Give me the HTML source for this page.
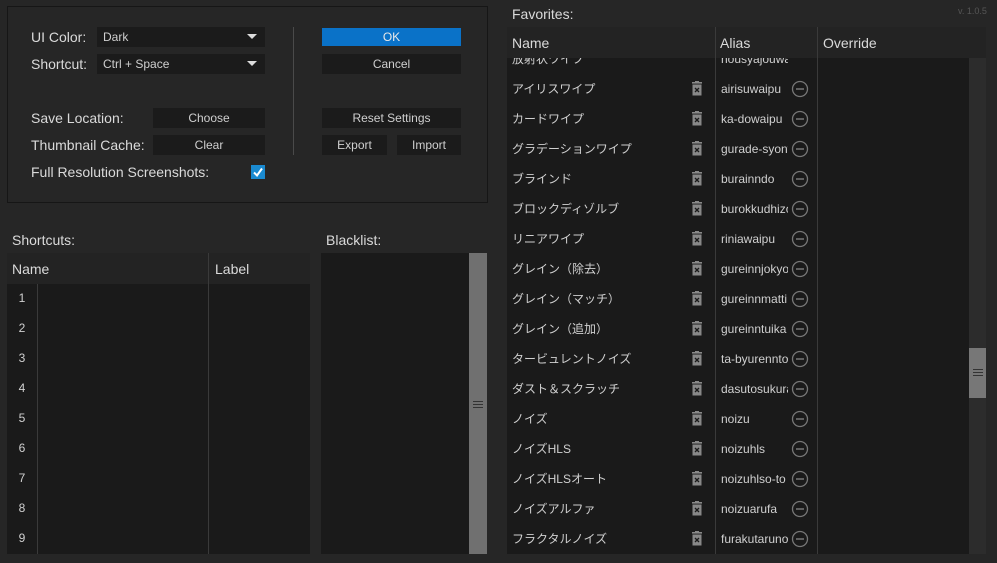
<!DOCTYPE html>
<html><head><meta charset="utf-8"><style>
*{margin:0;padding:0;box-sizing:border-box}
body{width:997px;height:563px;background:#262626;font-family:"Liberation Sans","Noto Sans CJK JP",sans-serif;color:#d2d2d2;position:relative;overflow:hidden;font-size:14px}
.a{position:absolute}
.box{left:7px;top:6px;width:481px;height:197px;border:1px solid #161616}
.lbl{font-size:14px;color:#dadada}
.dd{background:#1b1b1b;height:20px;font-size:12px;padding-left:6px;line-height:20px;color:#cfcfcf}
.dd:after{content:"";position:absolute;right:8px;top:7px;border-left:5px solid transparent;border-right:5px solid transparent;border-top:5px solid #ddd}
.btn{background:#1b1b1b;height:20px;font-size:12px;line-height:20px;text-align:center;color:#cfcfcf}
.hdr{background:#232323}
.body{background:#1a1a1a}
.vl{width:1px;background:#3a3a3a}
.num{font-size:12px;color:#d0d0d0;width:30px;text-align:center}
.fn{font-size:12px;color:#d0d0d0;line-height:14px}
.al{font-size:12px;color:#d0d0d0;width:67px;overflow:hidden;white-space:nowrap}
</style></head><body>
<div class="a box"></div>
<div class="a lbl" style="left:31px;top:29px">UI Color:</div>
<div class="a dd" style="left:97px;top:27px;width:168px">Dark</div>
<div class="a lbl" style="left:31px;top:56px">Shortcut:</div>
<div class="a dd" style="left:97px;top:54px;width:168px">Ctrl + Space</div>
<div class="a lbl" style="left:31px;top:110px">Save Location:</div>
<div class="a btn" style="left:153px;top:108px;width:112px">Choose</div>
<div class="a lbl" style="left:31px;top:137px">Thumbnail Cache:</div>
<div class="a btn" style="left:153px;top:135px;width:112px">Clear</div>
<div class="a lbl" style="left:31px;top:164px">Full Resolution Screenshots:</div>
<div class="a" style="left:251px;top:165px;width:14px;height:14px;background:#1a8ad0"><svg width="14" height="14"><path d="M3 7.5 L6 10.5 L11 3.5" stroke="#fff" stroke-width="2" fill="none"/></svg></div>
<div class="a" style="left:293px;top:27px;width:1px;height:128px;background:#4a4a4a"></div>
<div class="a btn" style="left:322px;top:28px;width:139px;height:18px;line-height:18px;background:#0a72c8;color:#e8e8e8">OK</div>
<div class="a btn" style="left:322px;top:54px;width:139px">Cancel</div>
<div class="a btn" style="left:322px;top:108px;width:139px">Reset Settings</div>
<div class="a btn" style="left:322px;top:135px;width:65px">Export</div>
<div class="a btn" style="left:397px;top:135px;width:64px">Import</div>

<div class="a lbl" style="left:12px;top:232px">Shortcuts:</div>
<div class="a hdr" style="left:7px;top:253px;width:303px;height:31px"></div>
<div class="a lbl" style="left:12px;top:261px">Name</div>
<div class="a lbl" style="left:215px;top:261px">Label</div>
<div class="a body" style="left:7px;top:284px;width:303px;height:270px"></div>
<div class="a vl" style="left:37px;top:284px;height:270px"></div>
<div class="a vl" style="left:208px;top:253px;height:301px"></div>
<div class="a num" style="left:7px;top:291px">1</div>
<div class="a num" style="left:7px;top:321px">2</div>
<div class="a num" style="left:7px;top:351px">3</div>
<div class="a num" style="left:7px;top:381px">4</div>
<div class="a num" style="left:7px;top:411px">5</div>
<div class="a num" style="left:7px;top:441px">6</div>
<div class="a num" style="left:7px;top:471px">7</div>
<div class="a num" style="left:7px;top:501px">8</div>
<div class="a num" style="left:7px;top:531px">9</div>

<div class="a lbl" style="left:326px;top:232px">Blacklist:</div>
<div class="a body" style="left:321px;top:253px;width:148px;height:301px"></div>
<div class="a" style="left:469px;top:253px;width:18px;height:301px;background:#707070"></div>
<div class="a" style="left:473px;top:401px;width:10px;height:7px;border-top:1px solid #333;border-bottom:1px solid #333"></div>
<div class="a" style="left:473px;top:404px;width:10px;height:1px;background:#333"></div>

<div class="a lbl" style="left:512px;top:6px">Favorites:</div>
<div class="a" style="left:958px;top:6px;font-size:9px;color:#555">v. 1.0.5</div>
<div class="a body" style="left:507px;top:27px;width:462px;height:527px"></div>
<div class="a" style="left:969px;top:58px;width:17px;height:496px;background:#2c2c2c"></div>
<div class="a" style="left:969px;top:348px;width:17px;height:50px;background:#777"></div>
<div class="a" style="left:973px;top:369px;width:10px;height:7px;border-top:1px solid #333;border-bottom:1px solid #333"></div>
<div class="a" style="left:973px;top:372px;width:10px;height:1px;background:#333"></div>
<div class="a vl" style="left:715px;top:27px;height:527px"></div>
<div class="a vl" style="left:817px;top:27px;height:527px"></div>

<div class="a fn" style="left:512px;top:52px">放射状ワイプ</div><div class="a al" style="left:721px;top:52px">housyajouwaipu</div>
<div class="a fn" style="left:512px;top:82px">アイリスワイプ</div><div class="a al" style="left:721px;top:82px">airisuwaipu</div>
<div class="a fn" style="left:512px;top:112px">カードワイプ</div><div class="a al" style="left:721px;top:112px">ka-dowaipu</div>
<div class="a fn" style="left:512px;top:142px">グラデーションワイプ</div><div class="a al" style="left:721px;top:142px">gurade-syonwaipu</div>
<div class="a fn" style="left:512px;top:172px">ブラインド</div><div class="a al" style="left:721px;top:172px">burainndo</div>
<div class="a fn" style="left:512px;top:202px">ブロックディゾルブ</div><div class="a al" style="left:721px;top:202px">burokkudhizoru</div>
<div class="a fn" style="left:512px;top:232px">リニアワイプ</div><div class="a al" style="left:721px;top:232px">riniawaipu</div>
<div class="a fn" style="left:512px;top:262px">グレイン（除去）</div><div class="a al" style="left:721px;top:262px">gureinnjokyo</div>
<div class="a fn" style="left:512px;top:292px">グレイン（マッチ）</div><div class="a al" style="left:721px;top:292px">gureinnmatti</div>
<div class="a fn" style="left:512px;top:322px">グレイン（追加）</div><div class="a al" style="left:721px;top:322px">gureinntuika</div>
<div class="a fn" style="left:512px;top:352px">タービュレントノイズ</div><div class="a al" style="left:721px;top:352px">ta-byurenntonoizu</div>
<div class="a fn" style="left:512px;top:382px">ダスト＆スクラッチ</div><div class="a al" style="left:721px;top:382px">dasutosukuratti</div>
<div class="a fn" style="left:512px;top:412px">ノイズ</div><div class="a al" style="left:721px;top:412px">noizu</div>
<div class="a fn" style="left:512px;top:442px">ノイズHLS</div><div class="a al" style="left:721px;top:442px">noizuhls</div>
<div class="a fn" style="left:512px;top:472px">ノイズHLSオート</div><div class="a al" style="left:721px;top:472px">noizuhlso-to</div>
<div class="a fn" style="left:512px;top:502px">ノイズアルファ</div><div class="a al" style="left:721px;top:502px">noizuarufa</div>
<div class="a fn" style="left:512px;top:532px">フラクタルノイズ</div><div class="a al" style="left:721px;top:532px">furakutarunoizu</div>
<svg class="a" style="left:0;top:0" width="997" height="563">
<defs><g id="t"><rect x="-5" y="-7" width="10" height="1.6" fill="#888"/><rect x="-2" y="-8" width="4" height="1.5" fill="#888"/><rect x="-4.5" y="-4.5" width="9" height="11" fill="#888"/><path d="M-2 -1 L2 3 M2 -1 L-2 3" stroke="#1a1a1a" stroke-width="1.3"/></g>
<g id="m"><circle r="7.5" fill="none" stroke="#777" stroke-width="1.3"/><line x1="-4" x2="4" y1="0" y2="0" stroke="#777" stroke-width="1.5"/></g></defs>
<g>
<use href="#t" x="697" y="89"/><use href="#t" x="697" y="119"/><use href="#t" x="697" y="149"/><use href="#t" x="697" y="179"/><use href="#t" x="697" y="209"/><use href="#t" x="697" y="239"/><use href="#t" x="697" y="269"/><use href="#t" x="697" y="299"/><use href="#t" x="697" y="329"/><use href="#t" x="697" y="359"/><use href="#t" x="697" y="389"/><use href="#t" x="697" y="419"/><use href="#t" x="697" y="449"/><use href="#t" x="697" y="479"/><use href="#t" x="697" y="509"/><use href="#t" x="697" y="539"/>
<use href="#m" x="800" y="89"/><use href="#m" x="800" y="119"/><use href="#m" x="800" y="149"/><use href="#m" x="800" y="179"/><use href="#m" x="800" y="209"/><use href="#m" x="800" y="239"/><use href="#m" x="800" y="269"/><use href="#m" x="800" y="299"/><use href="#m" x="800" y="329"/><use href="#m" x="800" y="359"/><use href="#m" x="800" y="389"/><use href="#m" x="800" y="419"/><use href="#m" x="800" y="449"/><use href="#m" x="800" y="479"/><use href="#m" x="800" y="509"/><use href="#m" x="800" y="539"/>
</g></svg>
<div class="a hdr" style="left:507px;top:27px;width:479px;height:31px"></div>
<div class="a vl" style="left:715px;top:27px;height:31px"></div>
<div class="a vl" style="left:817px;top:27px;height:31px"></div>
<div class="a lbl" style="left:512px;top:35px">Name</div>
<div class="a lbl" style="left:720px;top:35px">Alias</div>
<div class="a lbl" style="left:823px;top:35px">Override</div>
</body></html>
